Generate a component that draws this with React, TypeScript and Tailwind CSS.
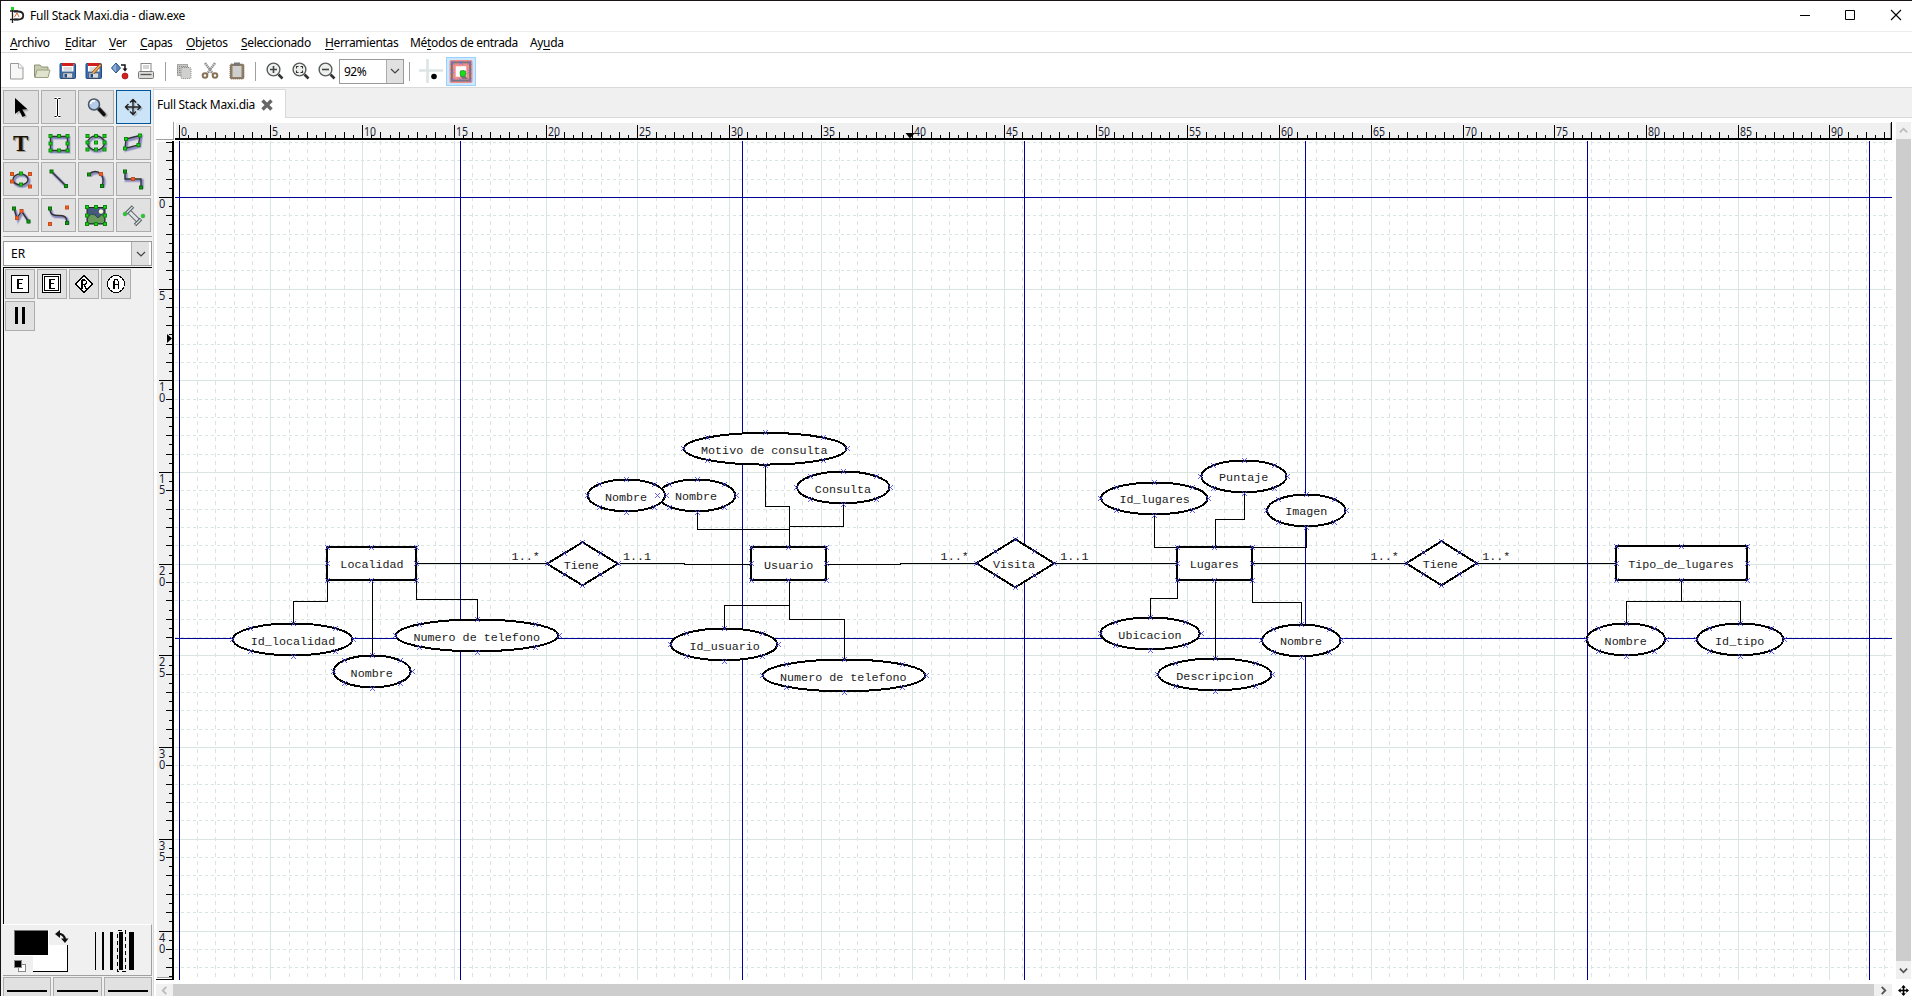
import React from "react";

const UI = "font-['Noto_Sans','Open_Sans',sans-serif]";

/* ---------- small helpers ---------- */

const ORANGE = "#ff5a1a";
const DARKG = "#159a15";
const Node = ({ x, y, c = "#17d417" }: { x: number; y: number; c?: string }) => (
  <rect x={x - 1.5} y={y - 1.5} width="3" height="3" fill={c} stroke={c === "#17d417" ? "#0d8a0d" : c === ORANGE ? "#c2501c" : "#0a6b0a"} strokeWidth="1" />
);

const Shadow = ({ d }: { d: string }) => (
  <>
    <path d={d} transform="translate(1.3 1.5)" fill="none" stroke="#9a9ad0" strokeWidth="4" opacity="0.45" />
    <path d={d} transform="translate(1.3 1.5)" fill="none" stroke="#6a6ab0" strokeWidth="2.2" opacity="0.6" />
    <path d={d} fill="none" stroke="#333" strokeWidth="1.4" />
  </>
);

const ToolButton = ({ active, children }: { active?: boolean; children: React.ReactNode }) => (
  <div className={active ? "h-[34px] border border-[#005499] bg-[#cce4f7]" : "h-[34px] border border-[#adadad] bg-[#e1e1e1]"}>
    <svg viewBox="1 1 34 32" className="block h-8 w-[34px]">{children}</svg>
  </div>
);

/* ---------- tool box ---------- */

const Tools = () => (
  <div className="grid w-[148px] grid-cols-4 gap-[2px]">
    <ToolButton>
      <path d="M14 10V25L18 22L21 28L24 27L21.500 21.500L26 21Z" fill="#888" opacity=".5" />
      <path d="M12 8V24L16.200 20.500L19.500 27L22.500 25.500L19.300 19.500L24.500 19.200Z" fill="#000" />
    </ToolButton>
    <ToolButton>
      <path d="M13.500 8.500H15.500L16.500 9.500L17.500 8.500H19.500M16.500 9.500V25.500M13.500 26.500H15.500L16.500 25.500L17.500 26.500H19.500" fill="none" stroke="#fff" strokeWidth="3" />
      <path d="M13.500 8.500H15.500L16.500 9.500L17.500 8.500H19.500M16.500 9.500V25.500M13.500 26.500H15.500L16.500 25.500L17.500 26.500H19.500" fill="none" stroke="#000" />
    </ToolButton>
    <ToolButton>
      <path d="M21 19L27 25" stroke="#777" strokeWidth="5" strokeLinecap="round" opacity=".5" />
      <path d="M21 19L26 24.500" stroke="#111" strokeWidth="3.500" strokeLinecap="round" />
      <circle cx="16" cy="14.500" r="5.500" fill="#b4cbea" stroke="#4b5868" strokeWidth="1.500" />
      <path d="M12.500 14A3.500 3.500 0 0 1 17 11" stroke="#fff" strokeWidth="1.600" fill="none" />
    </ToolButton>
    <ToolButton active>
      <path d="M17 9V25M9 17H25M14.500 12L17 9.500L19.500 12M14.500 22L17 24.500L19.500 22M12 14.500L9.500 17L12 19.500M22 14.500L24.500 17L22 19.500" stroke="#8a97a5" strokeWidth="1.400" fill="none" transform="translate(1.500 1.500)" opacity=".6" />
      <path d="M17 9V25M9 17H25M14 12.500L17 9.500L20 12.500M14 21.500L17 24.500L20 21.500M12.500 14L9.500 17L12.500 20M21.500 14L24.500 17L21.500 20" stroke="#222" strokeWidth="1.400" fill="none" />
    </ToolButton>

    <ToolButton>
      <text x="19" y="26" textAnchor="middle" fontSize="23" fontWeight="700" fill="#a79c88" fontFamily="Liberation Serif, serif">T</text>
      <text x="17.700" y="24.500" textAnchor="middle" fontSize="23" fontWeight="700" fill="#1a1208" fontFamily="Liberation Serif, serif">T</text>
    </ToolButton>
    <ToolButton>
      <Shadow d="M9.500 10.500H26.500V24.500H9.500Z" />
      {[9.5, 18, 26.5].map((x) => [10, 17.5, 24.5].map((y) => (x === 18 && y === 17.5 ? null : <Node key={x + "-" + y} x={x} y={y} />)))}
    </ToolButton>
    <ToolButton>
      <Shadow d="M9.500 17A8.500 7 0 1 1 26.500 17A8.500 7 0 1 1 9.500 17" />
      {[9.5, 18, 26.5].map((x) => [10, 16.5, 23.5].map((y) => <Node key={x + "-" + y} x={x} y={y} />))}
    </ToolButton>
    <ToolButton>
      <Shadow d="M10 13L24 9.500L22.500 19L9 22.500Z" />
      <Node x={10} y={13} /><Node x={24} y={9.500} /><Node x={22.500} y={19} /><Node x={9} y={22.500} />
    </ToolButton>

    <ToolButton>
      <Shadow d="M10 17.500A7.500 5.500 0 1 1 25 17.500A7.500 5.500 0 1 1 10 17.500" />
      <Node x={9} y={12} c={ORANGE} /><Node x={27} y={12} c={ORANGE} /><Node x={9} y={19.500} c={ORANGE} /><Node x={27} y={24.500} c={ORANGE} />
      <Node x={18} y={11.500} /><Node x={18} y={22.500} />
    </ToolButton>
    <ToolButton>
      <Shadow d="M10.500 9.500L25 24" />
      <Node x={10.500} y={9.500} c={DARKG} /><Node x={25} y={24} c={DARKG} />
    </ToolButton>
    <ToolButton>
      <Shadow d="M11 12.500C15 8 20 9 22.500 12C25.500 15 25.500 20 24 24" />
      <Node x={11} y={12.500} c={DARKG} /><Node x={23} y={12} c={ORANGE} /><Node x={24} y={24} c={DARKG} />
    </ToolButton>
    <ToolButton>
      <Shadow d="M9 9.500V17H25V25.500" />
      <Node x={9} y={9.500} c={DARKG} /><Node x={17} y={17} c={ORANGE} /><Node x={25} y={25.500} c={DARKG} />
    </ToolButton>

    <ToolButton>
      <Shadow d="M11 10.500L14 20.500L18.500 13L25.500 23.500" />
      <Node x={11} y={10.500} c={DARKG} /><Node x={14} y={20} c={ORANGE} /><Node x={18.500} y={13} c={ORANGE} /><Node x={25.500} y={23.500} c={DARKG} />
    </ToolButton>
    <ToolButton>
      <Shadow d="M9 10.500C9 18 14 17.500 18 17.500C23 17.500 25.500 18 26 25" />
      <Node x={9} y={10.500} c={DARKG} /><Node x={26} y={9.500} c={ORANGE} /><Node x={9} y={26} c={ORANGE} /><Node x={26} y={25} c={DARKG} />
    </ToolButton>
    <ToolButton>
      <rect x="9" y="9.500" width="18" height="16.500" fill="#44597c" stroke="#222" />
      <circle cx="23" cy="13.500" r="2.200" fill="#fff9cf" />
      <path d="M9.500 20L13 16L17 17L20 20L24 16.500L26.500 19V25.500H9.500Z" fill="#6a9a5a" stroke="#234" strokeWidth=".7" />
      {[9, 18, 27].map((x) => [9, 26].map((y) => <Node key={x + "-" + y} x={x} y={y} />))}
      <Node x={9} y={17.500} /><Node x={27} y={17.500} />
    </ToolButton>
    <ToolButton>
      <path d="M13 13.500L23 23.500" stroke="#667" strokeWidth="5" />
      <path d="M13 13.500L23 23.500" stroke="#dfe6e6" strokeWidth="3" />
      <path d="M10 15.500L17 8.500M19 27L25 21" stroke="#555f60" strokeWidth="3.500" />
      <path d="M10.500 15L16.500 9M19.500 26.500L24.500 21.500" stroke="#dfe6e6" strokeWidth="1.300" />
      <circle cx="9" cy="16" r="1.900" fill="#17d417" stroke="#496" strokeWidth=".6" /><circle cx="27" cy="18" r="1.900" fill="#17d417" stroke="#496" strokeWidth=".6" />
    </ToolButton>
  </div>
);

const SheetButton = ({ children }: { children: React.ReactNode }) => (
  <div className="h-[30px] w-[30px] border border-[#adadad] bg-[#e1e1e1]">
    <svg viewBox="1 1 28 28" className="block h-7 w-7" shapeRendering="crispEdges">{children}</svg>
  </div>
);
const LetterE = () => (
  <path d="M12 10H14V20H12ZM14 10H18V11H14ZM14 14H17V15H14ZM14 19H18V20H14Z" fill="#000" />
);

const Sheet = () => (
  <div className="flex flex-1 flex-wrap content-start gap-[2px] border-l border-t border-black pl-px pt-px">
    <SheetButton>
      <rect x="6.500" y="6.500" width="17" height="17" fill="#fff" stroke="#000" />
      <LetterE />
    </SheetButton>
    <SheetButton>
      <rect x="5.500" y="5.500" width="18" height="18" fill="#fff" stroke="#000" />
      <rect x="7.500" y="7.500" width="14" height="14" fill="#fff" stroke="#000" />
      <LetterE />
    </SheetButton>
    <SheetButton>
      <path d="M15 6.500L23.500 15L15 23.500L6.500 15Z" fill="#fff" stroke="#000" />
      <path d="M13 11V20M13 11H16L17.500 12.500V14L16 15.500H13M15 15.500L17.500 20" stroke="#000" strokeWidth="1.400" fill="none" />
    </SheetButton>
    <SheetButton>
      <circle cx="15" cy="15" r="8.500" fill="#fff" stroke="#000" />
      <path d="M12 12H14V20H12ZM17 12H18V20H17ZM13 10H17V12H16V11H14V12H13ZM14 15H17V16H14Z" fill="#000" />
    </SheetButton>
    <SheetButton>
      <path d="M11.500 6V23M18.500 6V23" stroke="#000" strokeWidth="3" />
    </SheetButton>
  </div>
);

const ColorArea = () => (
  <div className="h-[52px] shrink-0 border-b border-r border-t border-b-[#a0a0a0] border-r-[#a0a0a0] border-t-white">
    <svg viewBox="3 924 148 50" className="block h-[50px] w-[148px]" shapeRendering="crispEdges">
      <rect x="33" y="944" width="35" height="27" fill="#000" />
      <rect x="33" y="944" width="34" height="26" fill="#fff" />
      <rect x="14" y="929" width="35" height="26" fill="#fff" />
      <rect x="14" y="929" width="34" height="25" fill="#777" />
      <rect x="15" y="930" width="33" height="24" fill="#000" />
      <rect x="18.500" y="963.500" width="7" height="7" fill="#fff" stroke="#888" />
      <rect x="14.500" y="959.500" width="7" height="7" fill="#000" stroke="#888" />
      <g shapeRendering="auto">
        <path d="M58 933C62 932.500 65 935 65 939" fill="none" stroke="#111" strokeWidth="2.200" />
        <path d="M55 933L60 929V937ZM65 942L61 937.500H68.500Z" fill="#111" />
      </g>
      <path d="M95.500 931V969" stroke="#000" />
      <path d="M103 931V969" stroke="#000" strokeWidth="2" />
      <path d="M111.500 931V969" stroke="#000" strokeWidth="3" />
      <path d="M121 931V969" stroke="#000" strokeWidth="4" />
      <path d="M131.500 931V969" stroke="#000" strokeWidth="5" />
      <rect x="117.500" y="929.500" width="8" height="41" fill="none" stroke="#000" strokeDasharray="4 3" />
    </svg>
  </div>
);

const LineButton = () => (
  <div className="h-8 border border-[#adadad] bg-[#e1e1e1] px-[3px] pt-3">
    <div className="h-[2px] bg-black" />
  </div>
);

/* ---------- menu and tool bars ---------- */

const MENU: [string, string, string, string][] = [
  ["", "A", "rchivo", "w-[55px]"],
  ["", "E", "ditar", "w-[44px]"],
  ["", "V", "er", "w-[31px]"],
  ["", "C", "apas", "w-[46px]"],
  ["", "O", "bjetos", "w-[55px]"],
  ["", "S", "eleccionado", "w-[84px]"],
  ["", "H", "erramientas", "w-[85px]"],
  ["Mé", "t", "odos de entrada", "w-[120px]"],
  ["Ay", "u", "da", "w-[40px]"],
];

const Ico = ({ w, children }: { w: string; children: React.ReactNode }) => (
  <div className={"flex shrink-0 justify-center " + w}>
    <svg viewBox="0 0 20 20" className="h-5 w-5 overflow-visible">{children}</svg>
  </div>
);
const Sep = () => <div className="h-[19px] w-px shrink-0 bg-[#a0a0a0]" />;

const Floppy = () => (
  <>
    <rect x="2" y="2.500" width="15.500" height="15" rx="1" fill="#3b6fae" stroke="#1f4a80" />
    <rect x="4" y="2.500" width="11.500" height="8" fill="#fff" />
    <rect x="4" y="2" width="11.500" height="3" fill="#d0201c" />
    <path d="M5.500 7H14M5.500 9H14" stroke="#bbb" />
    <rect x="5" y="12" width="9.500" height="5" fill="#d5dadf" stroke="#555" strokeWidth=".6" />
    <rect x="6.500" y="13" width="2.500" height="3.500" fill="#234b80" />
  </>
);
const Glass = ({ children }: { children?: React.ReactNode }) => (
  <>
    <path d="M13.500 13.500L17.500 17.500" stroke="#333" strokeWidth="2.600" />
    <circle cx="8.500" cy="8.500" r="6.400" fill="#eef0ee" stroke="#555b58" strokeWidth="1.400" />
    {children}
  </>
);

const Toolbar = () => (
  <div className="flex h-[34px] shrink-0 items-center bg-white pl-[3px] pt-[2px]">
    <Ico w="w-[25px]">
      <path d="M3.500 2.500H12L16 6.500V18H3.500Z" fill="#f7f7f6" stroke="#999" /><path d="M11.500 2.500V7H16" fill="#fff" stroke="#aaa" />
    </Ico>
    <Ico w="w-[26px]">
      <path d="M2.500 4H8L9.500 6H16V16H2.500Z" fill="#c9cdb0" stroke="#8c9278" /><path d="M5 9H18L16 16.500H3Z" fill="#e0e4cc" stroke="#9aa085" />
    </Ico>
    <Ico w="w-[26px]"><Floppy /></Ico>
    <Ico w="w-[26px]"><Floppy /><path d="M9 12L17 3.500" stroke="#8a4a1c" strokeWidth="3.200" /><path d="M9 12L16.500 4" stroke="#f0b05a" strokeWidth="1.800" /></Ico>
    <Ico w="w-[26px]">
      <path d="M6 2L10.500 7L6 12L1.500 7Z" fill="#5d85b5" stroke="#234f86" /><path d="M6 2.500V11.500L2.500 7Z" fill="#8fb0d6" />
      <path d="M11 4H15V9" fill="none" stroke="#111" strokeWidth="1.500" /><path d="M12.500 7.500H17.500L15 10.500Z" fill="#111" />
      <circle cx="15" cy="15" r="3" fill="#d82020" stroke="#8d1010" strokeWidth=".7" />
    </Ico>
    <Ico w="w-[26px]">
      <rect x="5" y="2.500" width="10" height="8" fill="#fff" stroke="#888" /><path d="M7 5H13M7 7H13" stroke="#aaa" />
      <rect x="2.500" y="10.500" width="15" height="7" rx="1" fill="#dcdcda" stroke="#777" /><path d="M4.500 13.500H15.500" stroke="#555" strokeWidth="1.300" />
    </Ico>
    <div className="w-[6px] shrink-0" /><Sep /><div className="w-[5px] shrink-0" />
    <Ico w="w-[26px]">
      <rect x="3" y="3" width="11" height="12" fill="#c4c4c4" />
      <path d="M3.500 3.500H13.500V14.500H3.500ZM3 5.500H14M3 7.500H14M3 9.500H14M3 11.500H14" fill="none" stroke="#8e8e8e" strokeDasharray="1 1" />
      <rect x="7" y="6.500" width="10" height="11" rx="1" fill="#d0d0ce" stroke="#888" strokeDasharray="1 1" />
    </Ico>
    <Ico w="w-[26px]">
      <path d="M5 2L13 13M15 2L7 13" stroke="#8d8d8d" strokeWidth="2.500" strokeDasharray="1.500 .6" />
      <circle cx="5" cy="14.500" r="2.300" fill="none" stroke="#8a7355" strokeWidth="2" /><circle cx="15" cy="14.500" r="2.300" fill="none" stroke="#8a7355" strokeWidth="2" />
    </Ico>
    <Ico w="w-[27px]">
      <rect x="3" y="3" width="14" height="15" rx="1.500" fill="#8f7d66" stroke="#77644c" strokeDasharray="1 1" />
      <rect x="5.500" y="5" width="9" height="11" fill="#cfcfcf" /><rect x="7" y="1.500" width="6" height="3" fill="#777" />
    </Ico>
    <div className="w-[5px] shrink-0" /><Sep /><div className="w-[5px] shrink-0" />
    <Ico w="w-[27px]"><Glass><path d="M5 8.500H12M8.500 5V12" stroke="#444" strokeWidth="1.600" /></Glass></Ico>
    <Ico w="w-[26px]"><Glass><path d="M5.500 7.500V5.500H7.500M9.500 5.500H11.500V7.500M11.500 9.500V11.500H9.500M7.500 11.500H5.500V9.500" fill="none" stroke="#333" strokeWidth="1.100" /></Glass></Ico>
    <Ico w="w-[25px]"><Glass><path d="M5 8.500H12" stroke="#444" strokeWidth="1.600" /></Glass></Ico>
    <div className="flex h-[25px] w-[65px] shrink-0 border border-[#999]">
      <div className="flex-1 pl-[4px] text-[12px] leading-[23px] tracking-[-0.5px]">92%</div>
      <div className="flex w-[17px] items-center justify-center border-l border-[#adadad] bg-[#e1e1e1]">
        <svg viewBox="0 0 10 6" className="h-[6px] w-[10px]"><path d="M1 1L5 5L9 1" fill="none" stroke="#444" strokeWidth="1.200" /></svg>
      </div>
    </div>
    <div className="w-[5px] shrink-0" /><Sep /><div className="w-[9px] shrink-0" />
    <svg viewBox="0 0 24 24" className="h-6 w-6 shrink-0">
      <path d="M8.500 0V24M0 11.500H24" stroke="#dbe5e3" strokeWidth="2.600" /><circle cx="15" cy="17.500" r="2.800" fill="#000" />
    </svg>
    <div className="ml-[3px] h-[29px] w-[30px] shrink-0 border border-[#99d1ff] bg-[#cce8ff] p-[2px]">
      <svg viewBox="0 0 24 24" className="h-[23px] w-6">
        <rect x="0" y="0" width="24" height="24" rx="2" fill="#f08f8a" />
        <rect x="2.500" y="2.500" width="19" height="19" fill="none" stroke="#777" strokeWidth="2" />
        <rect x="6.500" y="6.500" width="11" height="11" fill="#fff" />
        <path d="M11 11H17V17L19 20H14L11 17Z" fill="#777" />
        <circle cx="14" cy="14" r="3" fill="#18e018" stroke="#0a8d0a" strokeDasharray="1 1" />
        {[3, 12, 21].map((x) => [3, 12, 21].map((y) => (x === 12 && y === 12 ? null : <path key={x + "-" + y} d={`M${x - 2} ${y - 2}l4 4m0 -4l-4 4`} stroke="#6a6aff" strokeDasharray="1 .6" />)))}
      </svg>
    </div>
  </div>
);

/* ---------- rulers ---------- */

const UNIT = 18.34;
const gx = (k: number) => Math.floor(179.2 + UNIT * k);
const gy = (k: number) => Math.floor(197.4 + UNIT * k);
const range = (a: number, b: number) => Array.from({ length: b - a + 1 }, (_, i) => a + i);

const TopRuler = () => {
  let d = "";
  range(0, 187).forEach((i) => {
    const x = gx(i / 2) + 0.5;
    if (x < 1890) d += `M${x} ${i % 10 === 0 ? 125 : i % 2 === 0 ? 132 : 135}V138`;
  });
  return (
    <svg viewBox="175 122 1717 19" className="block h-[19px] w-[1717px]">
      <rect x="176" y="123" width="1715" height="15" fill="#f0f0f0" />
      <rect x="1890" y="123" width="1" height="15" fill="#a0a0a0" />
      <g shapeRendering="crispEdges">
        <path d={d} stroke="#000" />
        <rect x="175" y="138" width="1717" height="2" fill="#000" />
        <rect x="1891" y="122" width="1" height="18" fill="#000" />
      </g>
      {range(0, 18).map((k) => (
        <text key={k} x={gx(k * 5) + 2} y="136" fontSize="12" textLength={k * 5 < 10 ? 6 : 12} lengthAdjust="spacingAndGlyphs" fill="#1c1c30">{k * 5}</text>
      ))}
      <path d="M905.500 133H915L910 138.500Z" fill="#000" />
    </svg>
  );
};

const LeftRuler = () => {
  let d = "";
  range(-6, 85).forEach((i) => {
    const y = gy(i / 2) + 0.5;
    if (y < 978) d += `M${i % 10 === 0 ? 159 : i % 2 === 0 ? 166 : 169} ${y}H172`;
  });
  return (
    <svg viewBox="156 141 19 839" className="block h-[839px] w-[19px]">
      <rect x="157" y="142" width="15" height="836" fill="#f0f0f0" />
      <g shapeRendering="crispEdges">
        <path d={d} stroke="#000" />
        <rect x="172" y="141" width="2" height="839" fill="#000" />
        <rect x="157" y="977" width="15" height="1" fill="#a0a0a0" />
        <rect x="156" y="979" width="18" height="1" fill="#000" />
      </g>
      {range(0, 8).map((k) =>
        String(k * 5).split("").map((ch, j) => (
          <text key={k + "-" + j} x="159" y={gy(k * 5) + 11 + j * 11} fontSize="12" textLength="6.300" lengthAdjust="spacingAndGlyphs" fill="#1c1c30">{ch}</text>
        ))
      )}
      <path d="M167 334V343L172 338.500Z" fill="#000" />
    </svg>
  );
};

/* ---------- diagram ---------- */

type P = [number, number];
const ELLIPSES: [number, number, number, string, number, number][] = [
  [293, 639.5, 60, "Id_localidad", 293, 645],
  [372.5, 671.5, 39, "Nombre", 371.7, 677],
  [477.5, 635.5, 81.5, "Numero de telefono", 476.7, 641],
  [765.5, 448.8, 81.5, "Motivo de consulta", 764.3, 454],
  [697, 495.5, 39, "Nombre", 696, 500],
  [626.8, 495.5, 39, "Nombre", 626, 501],
  [843.7, 487.5, 46.5, "Consulta", 843, 493],
  [724.5, 644.5, 53.5, "Id_usuario", 724.7, 650],
  [844.5, 675.5, 81.5, "Numero de telefono", 843.3, 681],
  [1154.7, 498.5, 53.5, "Id_lugares", 1154.7, 503],
  [1244.3, 476.5, 43, "Puntaje", 1243.7, 481],
  [1306.7, 510.5, 39.5, "Imagen", 1306.3, 515],
  [1150.5, 633.5, 50, "Ubicacion", 1150, 639],
  [1215.3, 674.5, 57, "Descripcion", 1215, 680],
  [1301.7, 640.5, 39.5, "Nombre", 1301, 645],
  [1626.3, 639.5, 39.5, "Nombre", 1625.7, 645],
  [1740.5, 639.5, 43.5, "Id_tipo", 1739.7, 645],
];
const RECTS: [number, number, number, number, string, number, number][] = [
  [327, 547, 416, 580, "Localidad", 372, 568],
  [751, 547, 826, 580, "Usuario", 788.7, 569],
  [1177, 547, 1252, 580, "Lugares", 1214.3, 568],
  [1616, 546, 1747, 580, "Tipo_de_lugares", 1681, 568],
];
const DIAMONDS: [number, number, number, number, string, number, number][] = [
  [582.5, 563.8, 35.5, 21.5, "Tiene", 581.3, 569],
  [1015.3, 563.3, 39, 24, "Visita", 1014, 568],
  [1441.5, 563.3, 35.3, 22, "Tiene", 1440.3, 568],
];
const LINKS = [
  "M416 563H547", "M619 563H684V564H751", "M826 564H900V563H976", "M1054 563H1177", "M1252 563H1407", "M1477 563H1616",
  "M327 580V601H293V623", "M372 580V655", "M416 580V599H477V619",
  "M765 465V506H789V547", "M697 512V529H789", "M843 504V526H789",
  "M789 580V605H724V628", "M789 605V619H844V659",
  "M1154 515V547H1177", "M1244 493V519H1215V547", "M1306 527V547H1252",
  "M1177 580V598H1150V617", "M1215 580V658", "M1252 580V602H1301V624",
  "M1681 580V601M1626 623V601H1740V623",
];
const CARDS: [string, number, number][] = [
  ["1..*", 511.6, 560], ["1..1", 623, 560], ["1..*", 940.6, 560], ["1..1", 1060.3, 560], ["1..*", 1370.6, 560], ["1..*", 1482.2, 560],
];

const Diagram = () => {
  let minor = "";
  let minorH = "";
  let major = "";
  range(0, 93).forEach((k) => {
    const s = `M${gx(k) + 0.5} 141V980`;
    if (k % 5 === 0) major += s;
    else minor += s;
  });
  range(-3, 42).forEach((k) => {
    const s = `M175 ${gy(k) + 0.5}H1892`;
    if (k % 5 === 0) major += s;
    else minorH += s;
  });
  const marks: P[] = [];
  ELLIPSES.forEach(([cx, cy, rx]) => {
    const a = rx * 0.707;
    const b = 11.5;
    marks.push([cx - rx - 0.5, cy], [cx + rx + 0.5, cy], [cx, cy - 16.3], [cx, cy + 16.5], [cx - a, cy - b], [cx + a, cy - b], [cx - a, cy + b], [cx + a, cy + b]);
  });
  RECTS.forEach(([l, t, r, b]) => {
    const mx = (l + r) / 2, my = (t + b) / 2;
    marks.push([l, t], [mx, t], [r, t], [l, my], [r, my], [l, b], [mx, b], [r, b]);
  });
  DIAMONDS.forEach(([cx, cy, w, h]) => {
    marks.push([cx - w, cy], [cx + w, cy], [cx, cy - h], [cx, cy + h], [cx - w / 2, cy - h / 2], [cx + w / 2, cy - h / 2], [cx - w / 2, cy + h / 2], [cx + w / 2, cy + h / 2]);
  });
  return (
    <svg viewBox="175 141 1717 839" className="block h-[839px] w-[1717px] bg-white" fontFamily="Liberation Mono, monospace" fontSize="11.730">
      <g shapeRendering="crispEdges" fill="none">
        <path d={minor} stroke="#d8e5e2" strokeDasharray="4 4" />
        <path d={minorH} stroke="#d8e5e2" strokeDasharray="3 3" />
        <path d={major} stroke="#d8e5e2" />
        <path d="M175 197.500H1892M175 638.500H1892M179.500 141V980M460.500 141V980M742.500 141V980M1024.500 141V980M1305.500 141V980M1587.500 141V980M1869.500 141V980" stroke="#000099" />
      </g>
      <g stroke="#000" strokeWidth="2" fill="#fff" shapeRendering="crispEdges">
        {ELLIPSES.map(([cx, cy, rx], i) => <ellipse key={i} cx={cx - 0.4} cy={cy - 0.1} rx={rx - 0.4} ry="15.900" />)}
        {RECTS.map(([l, t, r, b], i) => <rect key={i} x={l} y={t} width={r - l} height={b - t} />)}
        {DIAMONDS.map(([cx, cy, w, h], i) => <path key={i} d={`M${cx - w} ${cy}L${cx} ${cy - h}L${cx + w} ${cy}L${cx} ${cy + h}Z`} />)}
      </g>
      <path d={LINKS.join("")} transform="translate(.5 .5)" fill="none" stroke="#000" shapeRendering="crispEdges" />
      <path d={marks.map(([x, y]) => `M${Math.floor(x) - 2} ${Math.floor(y) - 2}l5 5m0 -5l-5 5`).join("")} stroke="#4b4bf0" strokeWidth=".9" fill="none" />
      <g fill="#1a1a1a">
        {[...ELLIPSES.map((e) => [e[3], e[4], e[5]]), ...RECTS.map((e) => [e[4], e[5], e[6]]), ...DIAMONDS.map((e) => [e[4], e[5], e[6]])].map(([t, x, y], i) => (
          <text key={i} x={x} y={y} textAnchor="middle">{t}</text>
        ))}
        {CARDS.map(([t, x, y], i) => <text key={i} x={x} y={y}>{t}</text>)}
      </g>
    </svg>
  );
};

const Chevron = ({ d, c }: { d: string; c: string }) => (
  <svg viewBox="0 0 10 10" className="h-[9px] w-[9px]"><path d={d} fill="none" stroke={c} strokeWidth="2" /></svg>
);

export default function App() {
  return (
    <div className={"flex h-[996px] w-[1912px] flex-col overflow-hidden border-l border-t border-[#1a1418] bg-white text-[12px] text-black " + UI}>
      {/* title bar */}
      <div className="flex h-[31px] shrink-0 items-center border-b border-[#eeeeee] pl-[9px]">
        <svg viewBox="0 0 15 17" className="mb-[2px] h-[17px] w-[15px]">
          <path d="M2.500 2V16M0 4H8M0 12.500H8" stroke="#222" strokeWidth="1.300" fill="none" />
          <path d="M4 4.500H8C15 4.500 15 12.500 8 12.500H4" fill="none" stroke="#222" strokeWidth="1.800" />
          <path d="M4.500 10L7 6L9 10" stroke="#d8682c" fill="none" /><rect x="1" y="0" width="3" height="3" fill="#18d818" />
        </svg>
        <div className="mb-px ml-[5px] w-[1769px] shrink-0 whitespace-nowrap tracking-[-0.24px]">Full Stack Maxi.dia - diaw.exe</div>
        <svg viewBox="1799 1 110 30" className="h-[30px] w-[110px] shrink-0">
          <path d="M1800 15.500H1810M1845.500 10.500H1854.500V19.500H1845.500Z" stroke="#000" fill="none" />
          <path d="M1891 10L1901 20M1901 10L1891 20" stroke="#000" strokeWidth="1.100" />
        </svg>
      </div>
      {/* menu */}
      <div className="flex h-[21px] shrink-0 border-b border-[#d9d9d9] pl-[9px] leading-[21px]">
        {MENU.map(([a, u, b, w]) => (
          <div key={u + b} className={"shrink-0 whitespace-nowrap tracking-[-0.34px] " + w}>
            {a}<span className="underline decoration-1 underline-offset-2">{u}</span>{b}
          </div>
        ))}
      </div>
      <Toolbar />
      <div className="flex min-h-0 flex-1 border-t border-[#d9d9d9] bg-[#f0f0f0]">
        {/* left column */}
        <div className="flex w-[152px] shrink-0 flex-col pl-[2px] pr-px pt-[2px]">
          <Tools />
          <div className="mt-[4px] h-px shrink-0 bg-[#a0a0a0]" />
          <div className="mt-[4px] flex h-[25px] w-[149px] shrink-0 border border-[#999] bg-white">
            <div className="flex-1 pl-[7px] leading-[23px]">ER</div>
            <div className="mr-[2px] flex w-[18px] items-center justify-center border-l border-[#adadad] bg-[#e1e1e1]">
              <svg viewBox="0 0 10 6" className="h-[6px] w-[10px]"><path d="M1 1L5 5L9 1" fill="none" stroke="#444" strokeWidth="1.200" /></svg>
            </div>
          </div>
          <div className="mt-px flex min-h-0 flex-1"><Sheet /></div>
          <ColorArea />
          <div className="mt-px grid h-[19px] shrink-0 grid-cols-3 gap-[2px] overflow-hidden"><LineButton /><LineButton /><LineButton /></div>
        </div>
        {/* document area */}
        <div className="flex min-w-0 flex-1 flex-col border-l border-[#d9d9d9] bg-white">
          <div className="flex h-[30px] shrink-0 bg-[#f0f0f0]">
            <div className="mt-px flex w-[132px] items-center border-r border-t border-[#d9d9d9] bg-white pl-[3px] pt-[2px]">
              <div className="w-[104px] whitespace-nowrap tracking-[-0.28px]">Full Stack Maxi.dia</div>
              <svg viewBox="0 0 12 12" className="h-3 w-3"><path d="M1.500 1.500L10.500 10.500M10.500 1.500L1.500 10.500" stroke="#666" strokeWidth="3.400" /></svg>
            </div>
            <div className="flex-1 border-b border-[#d9d9d9]" />
          </div>
          <div className="mt-[4px] flex min-h-0 flex-1 pl-[2px]">
            <div className="flex w-[1736px] shrink-0 flex-col">
              <div className="flex">
                <div className="h-[19px] w-[19px] pb-px pr-px"><div className="h-[18px] w-[18px] border-b border-r border-[#a0a0a0]" /></div>
                <TopRuler />
              </div>
              <div className="flex"><LeftRuler /><Diagram /></div>
              <div className="mt-[4px] flex h-[17px] bg-[#f0f0f0]">
                <div className="flex w-[17px] items-center justify-center"><Chevron d="M7 1L3 5L7 9" c="#bbb" /></div>
                <div className="flex-1 bg-[#cdcdcd]" />
                <div className="flex w-[18px] items-center justify-center"><Chevron d="M3 1L7 5L3 9" c="#555" /></div>
              </div>
            </div>
            <div className="ml-[4px] flex w-[15px] shrink-0 flex-col">
              <div className="flex h-[17px] items-center justify-center bg-[#f0f0f0]"><Chevron d="M1 7L5 3L9 7" c="#bbb" /></div>
              <div className="h-[823px] bg-[#cdcdcd]" />
              <div className="flex h-[18px] items-center justify-center bg-[#f0f0f0]"><Chevron d="M1 3L5 7L9 3" c="#555" /></div>
              <svg viewBox="0 0 12 12" className="ml-[2px] mt-[6px] h-[11px] w-[11px]">
                <path d="M6 1V11M1 6H11" stroke="#000" strokeWidth="1.800" /><path d="M6 0L8.500 3H3.500ZM6 12L8.500 9H3.500ZM0 6L3 3.500V8.500ZM12 6L9 3.500V8.500Z" fill="#000" />
              </svg>
            </div>
          </div>
        </div>
      </div>
    </div>
  );
}
